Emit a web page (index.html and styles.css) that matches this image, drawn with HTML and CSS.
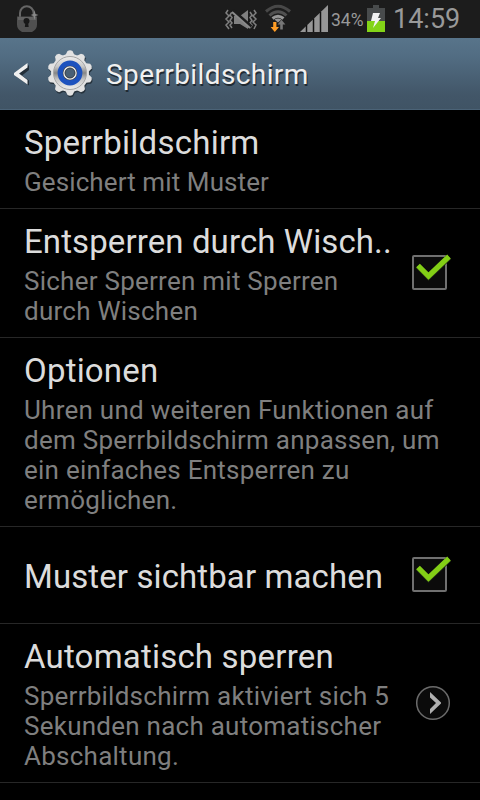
FILE: index.html
```html
<!DOCTYPE html>
<html lang="de">
<head>
<meta charset="utf-8">
<title>Sperrbildschirm</title>
<link rel="stylesheet" href="styles.css">
</head>
<body>
<div class="statusbar">
  <svg class="lock" width="24" height="30" viewBox="0 0 24 30">
    <path d="M4 13V9a6.800 6.800 0 0 1 13.600 0v4" fill="none" stroke="#666" stroke-width="2"/>
    <path d="M1 12.500h20v8q0 5-5 7.500H6q-5-2.500-5-7.500z" fill="#505050"/>
    <path d="M2 13h18v3H2z" fill="#626262"/>
    <circle cx="10.500" cy="17" r="3" fill="#181818"/><path d="M9.500 18h2.500l.7 5H8.800z" fill="#181818"/>
    <path d="M18.500 6l1 4 3 1-3 1-1 4-1-4-3-1 3-1z" fill="#888"/>
  </svg>
  <div class="status">
    <svg class="mute" width="34" height="22" viewBox="0 0 34 22">
      <g fill="none" stroke="#808080" stroke-width="1.500"><path d="M4 1L2 4l3 3-3 3 3 3-3 3 3 4M8 3L6 6l2 2.500-2 3L8 14l-2 2 2 3M26 3l2 3-2 2.500 2 3-2 2.500 2 2-2 3M30 1l2 3-3 3 3 3-3 3 3 3-2 4"/></g>
      <path d="M10 7h6l8-6v19l-8-5h-6z" fill="#808080"/>
      <path d="M8 1l19 17" stroke="#1c1c1c" stroke-width="4"/><path d="M8 3l18 16" stroke="#8b8b8b" stroke-width="2"/>
    </svg>
    <svg class="wifi" width="26" height="28" viewBox="0 0 26 28">
      <g fill="none" stroke-width="3"><path d="M1 7.500q12-10.500 24 0" stroke="#484848"/><path d="M4.500 11.500q8.500-7.500 17 0" stroke="#505050"/><path d="M7.500 14.500q5.500-4.500 11 0" stroke="#969696"/></g>
      <path d="M9.500 15.500q3.500-2 7 0L13 18.500z" fill="#969696"/>
      <path d="M8.200 18h3.200v5h2.600l-4.200 5-4.200-5h2.600z" fill="#ff9d25"/><path d="M15.200 25.500v-5h-2.600l3.900-4.700 3.900 4.700h-2.600v5z" fill="#777"/>
    </svg>
    <svg class="signal" width="28" height="27" viewBox="0 0 28 27">
      <path d="M0 27L28 0v27z" fill="#969696"/><path d="M6.500 20v7M13.500 13.500V27M20.500 7v20" stroke="#111" stroke-width="1.500"/>
    </svg>
    <span class="percent">34%</span>
    <svg class="battery" width="18" height="27" viewBox="0 0 18 27">
      <path d="M6 0h6v3h6v13H0V3h6z" fill="#484b4c"/><path d="M0 16h18v11H0z" fill="#83d417"/>
      <path d="M6 8h7l-2 5h3L6 23l2-7H4z" fill="#f2f2f2"/>
    </svg>
    <span class="clock">14:59</span>
  </div>
</div>
<div class="header">
  <svg class="back" width="16" height="24" viewBox="0 0 16 24">
    <path d="M14 1v5L7 11.500l7 5v5L1 12.500z" fill="#222e38" transform="translate(1 1)"/>
    <path d="M13.500 0v4.500L5 10.500l8.500 6.500v4.500L0 12v-2z" fill="#f0f0f0"/>
  </svg>
  <svg class="gear" width="48" height="50" viewBox="-24 -24 48 50">
    <defs>
      <linearGradient id="metal" x1="0" x2="0" y1="0" y2="1"><stop offset="0" stop-color="#eee"/><stop offset=".3" stop-color="#c8c8c8"/><stop offset=".5" stop-color="#858585"/><stop offset=".7" stop-color="#c8c8c8"/><stop offset="1" stop-color="#eee"/></linearGradient>
      <g id="cog"><circle r="19"/><path id="tooth" d="M-4.500-18l2-4q2.500-1.500 5 0l2 4v36l-2 4q-2.500 1.500-5 0l-2-4z"/><use href="#tooth" transform="rotate(36)"/><use href="#tooth" transform="rotate(72)"/><use href="#tooth" transform="rotate(108)"/><use href="#tooth" transform="rotate(144)"/></g>
    </defs>
    <use href="#cog" fill="#26323c" transform="translate(.7 1.500)"/><use href="#cog" fill="#e2e2e2"/>
    <circle r="16.500" fill="url(#metal)" stroke="#a5a5a5"/>
    <circle r="9.700" fill="#1d52be" stroke="#1d52be" stroke-width="5.400"/>
    <circle r="7.300" fill="#444"/>
    <circle r="6" fill="#4a6075" stroke="#ededed" stroke-width="1.500"/><circle r="5" fill="none" stroke="#333" stroke-width=".7"/>
  </svg>
  <h1>Sperrbildschirm</h1>
</div>
<div class="list">
  <div class="row"><div class="text"><div class="title t1">Sperrbildschirm</div><div class="sub s1">Gesichert mit Muster</div></div></div>
  <div class="row"><div class="text"><div class="title t2">Entsperren durch Wisch..</div><div class="sub">Sicher Sperren mit Sperren<br>durch Wischen</div></div>
    <svg class="check" width="40" height="38" viewBox="0 0 40 38"><rect x="1" y="4" width="33" height="33" rx="1" fill="#0b0b0b" stroke="#707070" stroke-width="2"/><path d="M6 14l10.500 10.500L37 5" fill="none" stroke="#202b15" stroke-width="6"/><path d="M6 13.500l10.500 10.500L37 4.500" fill="none" stroke="#83cf16" stroke-width="5.200"/></svg></div>
  <div class="row"><div class="text"><div class="title">Optionen</div><div class="sub">Uhren und weiteren Funktionen auf<br>dem Sperrbildschirm anpassen, um<br>ein einfaches Entsperren zu<br>ermöglichen.</div></div></div>
  <div class="row single"><div class="text"><div class="title t4">Muster sichtbar machen</div></div>
    <svg class="check" width="40" height="38" viewBox="0 0 40 38"><rect x="1" y="4" width="33" height="33" rx="1" fill="#0b0b0b" stroke="#707070" stroke-width="2"/><path d="M6 14l10.500 10.500L37 5" fill="none" stroke="#202b15" stroke-width="6"/><path d="M6 13.500l10.500 10.500L37 4.500" fill="none" stroke="#83cf16" stroke-width="5.200"/></svg></div>
  <div class="row"><div class="text"><div class="title">Automatisch sperren</div><div class="sub">Sperrbildschirm aktiviert sich 5<br>Sekunden nach automatischer<br>Abschaltung.</div></div>
    <svg class="more" width="36" height="36" viewBox="0 0 36 36"><circle cx="18" cy="18" r="16.300" fill="#0b0b0b" stroke="#6b6b6b" stroke-width="1.500"/><path d="M15 7l11 10.500v1L15 29v-5l6-6-6-5.500z" fill="#b0b0b0"/></svg></div>
</div>
</body>
</html>
```
FILE: styles.css
```css
* { box-sizing: border-box; }
body { margin: 0; width: 480px; height: 800px; overflow: hidden; background: #000; font-family: Roboto, "Liberation Sans", sans-serif; }
svg { display: block; flex: none; }
.statusbar { height: 38px; background: #1c1c1c; display: flex; justify-content: space-between; padding: 0 20px 0 16px; }
.lock { margin-top: 4px; }
.status { display: flex; color: #999; white-space: nowrap; }
.mute { margin: 9px 7px 0 0; }
.wifi { margin: 4px 9px 0 0; }
.signal { margin: 5px 3px 0 0; }
.percent { width: 36px; font-size: 17.5px; line-height: 40px; }
.battery { margin-top: 5px; }
.clock { width: 67px; margin-left: 8px; font-size: 27px; line-height: 38px; }
.header { height: 72px; display: flex; align-items: flex-start; background: linear-gradient(#58748a, #526d83 25%, #425668 80%, #405465); border-bottom: 1px solid #4b6377; padding-left: 14px; }
.back { margin-top: 25px; }
.gear { margin: 11px 0 0 16px; }
h1 { margin: 17px 0 0 12px; font-size: 28px; line-height: 40px; letter-spacing: 0.4px; font-weight: 400; color: #f0f0f0; text-shadow: 1px 2px 0 #202a33; white-space: nowrap; }
.row { display: flex; justify-content: space-between; align-items: center; padding: 10px 29px 11px 24px; border-bottom: 1px solid #272727; }
.text { white-space: nowrap; }
.title { font-size: 33px; line-height: 46px; margin-bottom: 1px; color: #dcdcdc; letter-spacing: 0.2px; }
.sub { font-size: 26px; line-height: 30px; color: #7f7f7f; letter-spacing: 0.25px; }
.t1 { letter-spacing: 0.25px; }
.t2, .t4, .s1 { letter-spacing: 0.1px; }
.single { height: 97px; }
.single .text { padding-top: 6px; }
.check { margin: 0 -1px 3px 0; }
```
